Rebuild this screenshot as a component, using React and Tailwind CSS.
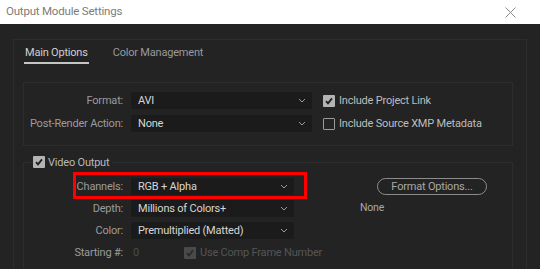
import React from 'react';

const FONT = "font-['Roboto',sans-serif]";

function Chevron() {
  return (
    <svg width="8" height="5" viewBox="0 0 8 5" className="shrink-0">
      <path d="M1 1l3 3 3-3" fill="none" stroke="#9a9a9a" strokeWidth="1" />
    </svg>
  );
}

function Dropdown({ value, width }) {
  return (
    <div className={`${width} h-[17px] bg-[#1b1b1b] rounded-[2px] flex items-center justify-between pl-[7px] pr-[6px] text-[#d6d6d6]`}>
      <span>{value}</span>
      <Chevron />
    </div>
  );
}

function Check({ checked, dim }) {
  if (!checked) {
    return <div className="w-[12px] h-[12px] border border-[#9a9a9a] rounded-[1px] shrink-0" />;
  }
  return (
    <div className={`w-[12px] h-[12px] rounded-[1px] shrink-0 flex items-center justify-center ${dim ? 'bg-[#4a4a4a]' : 'bg-[#b4b4b4]'}`}>
      <svg width="10" height="10" viewBox="0 0 10 10">
        <path d="M2 5.2l2 2.2 4-5" fill="none" stroke={dim ? '#2a2a2a' : '#1e1e1e'} strokeWidth="1.8" />
      </svg>
    </div>
  );
}

function Label({ children }) {
  return <div className="w-[100px] shrink-0 text-right text-[#9c9c9c] pr-[1px] whitespace-nowrap">{children}</div>;
}

export default function App() {
  return (
    <div className={`relative w-[540px] h-[269px] overflow-hidden bg-[#232323] flex flex-col text-[11px] tracking-[-0.2px] leading-none whitespace-nowrap ${FONT}`}>
      {/* title bar */}
      <div className="h-6 bg-white flex items-center justify-between pl-[6px] pr-[24px] shrink-0">
        <span className="text-[#7c7c7c] text-[11.5px]">Output Module Settings</span>
        <svg width="11" height="11" viewBox="0 0 11 11">
          <path d="M0.5 0.5l10 10M10.5 0.5l-10 10" stroke="#8a8a8a" strokeWidth="1" />
        </svg>
      </div>

      <div className="flex-1 pt-[15px] px-[13px]">
        <div className="border border-[#2d2d2d] h-[300px] pl-[9px] pr-[13px]">
          {/* tabs */}
          <div className="flex gap-[24px] pl-[1px] pt-[7px]">
            <span className="text-[#cfcfcf] pb-[4px] border-b-2 border-[#c4c4c4] px-[1px]">Main Options</span>
            <span className="text-[#9a9a9a]">Color Management</span>
          </div>

          {/* main box */}
          <div className="mt-[18px] border border-[#2d2d2d] pt-[9px] pb-[13px] flex flex-col gap-[6px]">
            <div className="flex items-center">
              <Label>Format:</Label>
              <div className="ml-[7px]"><Dropdown value="AVI" width="w-[181px]" /></div>
              <div className="ml-[11px] flex items-center gap-[4px] text-[#bdbdbd]">
                <Check checked />
                <span>Include Project Link</span>
              </div>
            </div>
            <div className="flex items-center">
              <Label>Post-Render Action:</Label>
              <div className="ml-[7px]"><Dropdown value="None" width="w-[181px]" /></div>
              <div className="ml-[11px] flex items-center gap-[4px] text-[#bdbdbd]">
                <Check />
                <span>Include Source XMP Metadata</span>
              </div>
            </div>
          </div>

          {/* video output */}
          <fieldset className="mt-[10px] border border-[#2d2d2d] h-[200px]">
            <legend className="ml-[9px] pr-[3px] flex items-center gap-[3px] text-[#b8b8b8]">
              <Check checked />
              <span>Video Output</span>
            </legend>
            <div className="pt-[10px] flex flex-col gap-[5px]">
              <div className="flex items-center">
                <Label>Channels:</Label>
                <div className="ml-[7px]"><Dropdown value="RGB + Alpha" width="w-[163px]" /></div>
                <div className="ml-[83px] w-[110px] h-[17px] rounded-full border border-[#8c8c8c] flex items-center justify-center text-[#a8a8a8]">
                  Format Options...
                </div>
              </div>
              <div className="flex items-center">
                <Label>Depth:</Label>
                <div className="ml-[7px]"><Dropdown value="Millions of Colors+" width="w-[163px]" /></div>
                <span className="ml-[66px] text-[#a8a8a8] text-[10.5px]">None</span>
              </div>
              <div className="flex items-center">
                <Label>Color:</Label>
                <div className="ml-[7px]"><Dropdown value="Premultiplied (Matted)" width="w-[163px]" /></div>
              </div>
              <div className="flex items-center h-[17px]">
                <Label>Starting #:</Label>
                <span className="ml-[9px] w-[51px] text-[#4c4c4c]">0</span>
                <div className="flex items-center gap-[4px] text-[#555555]">
                  <Check checked dim />
                  <span>Use Comp Frame Number</span>
                </div>
              </div>
            </div>
          </fieldset>
        </div>
      </div>

      {/* highlight annotation */}
      <div className="absolute left-[73px] top-[172px] w-[234px] h-[27px] border-[3px] border-[#ff0000]" />
    </div>
  );
}
